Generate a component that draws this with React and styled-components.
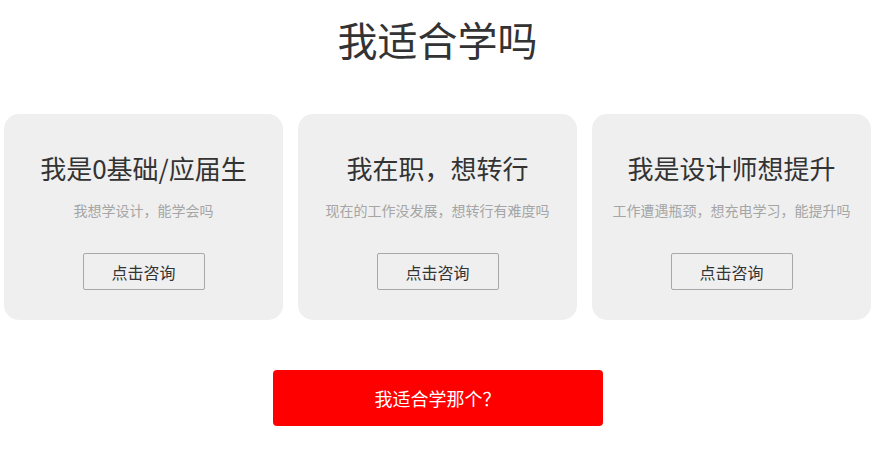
import React from 'react';
import styled, { createGlobalStyle } from 'styled-components';

const GlobalStyle = createGlobalStyle`
  body {
    margin: 0;
    background: #fff;
    font-family: "Microsoft YaHei", "Noto Sans CJK SC", "Noto Sans", sans-serif;
  }
`;

const Section = styled.section`
  display: flex;
  flex-direction: column;
  align-items: center;
  padding: 14px 5px 0 4px;
`;

const Heading = styled.h2`
  margin: 0;
  font-size: 40px;
  line-height: 50px;
  font-weight: 400;
  color: #333;
`;

const CardRow = styled.div`
  display: grid;
  grid-template-columns: repeat(3, 279px);
  gap: 15px;
  margin-top: 50px;
`;

const Card = styled.div`
  display: flex;
  flex-direction: column;
  align-items: center;
  background: #efefef;
  border-radius: 15px;
  padding: 36px 0 30px;
`;

const CardTitle = styled.h3`
  margin: 0;
  font-size: 26px;
  line-height: 36px;
  font-weight: 400;
  color: #333;
`;

const CardText = styled.p`
  margin: 14px 0 0;
  font-size: 14px;
  line-height: 20px;
  color: #a5a5a5;
  white-space: nowrap;
`;

const AskButton = styled.button`
  margin-top: 33px;
  width: 122px;
  height: 37px;
  border: 1px solid #a8a8a8;
  border-radius: 2px;
  background: transparent;
  font-family: inherit;
  font-size: 16px;
  color: #333;
  cursor: pointer;
`;

const MainButton = styled.button`
  margin-top: 50px;
  width: 330px;
  height: 56px;
  border: none;
  border-radius: 4px;
  background: #ff0000;
  color: #fff;
  font-family: inherit;
  font-size: 18px;
  cursor: pointer;
`;

const cards = [
  { title: '我是0基础/应届生', text: '我想学设计，能学会吗' },
  { title: '我在职，想转行', text: '现在的工作没发展，想转行有难度吗' },
  { title: '我是设计师想提升', text: '工作遭遇瓶颈，想充电学习，能提升吗' },
];

const App = () => (
  <>
    <GlobalStyle />
    <Section>
      <Heading>我适合学吗</Heading>
      <CardRow>
        {cards.map((c) => (
          <Card key={c.title}>
            <CardTitle>{c.title}</CardTitle>
            <CardText>{c.text}</CardText>
            <AskButton>点击咨询</AskButton>
          </Card>
        ))}
      </CardRow>
      <MainButton>我适合学那个？</MainButton>
    </Section>
  </>
);

export default App;
